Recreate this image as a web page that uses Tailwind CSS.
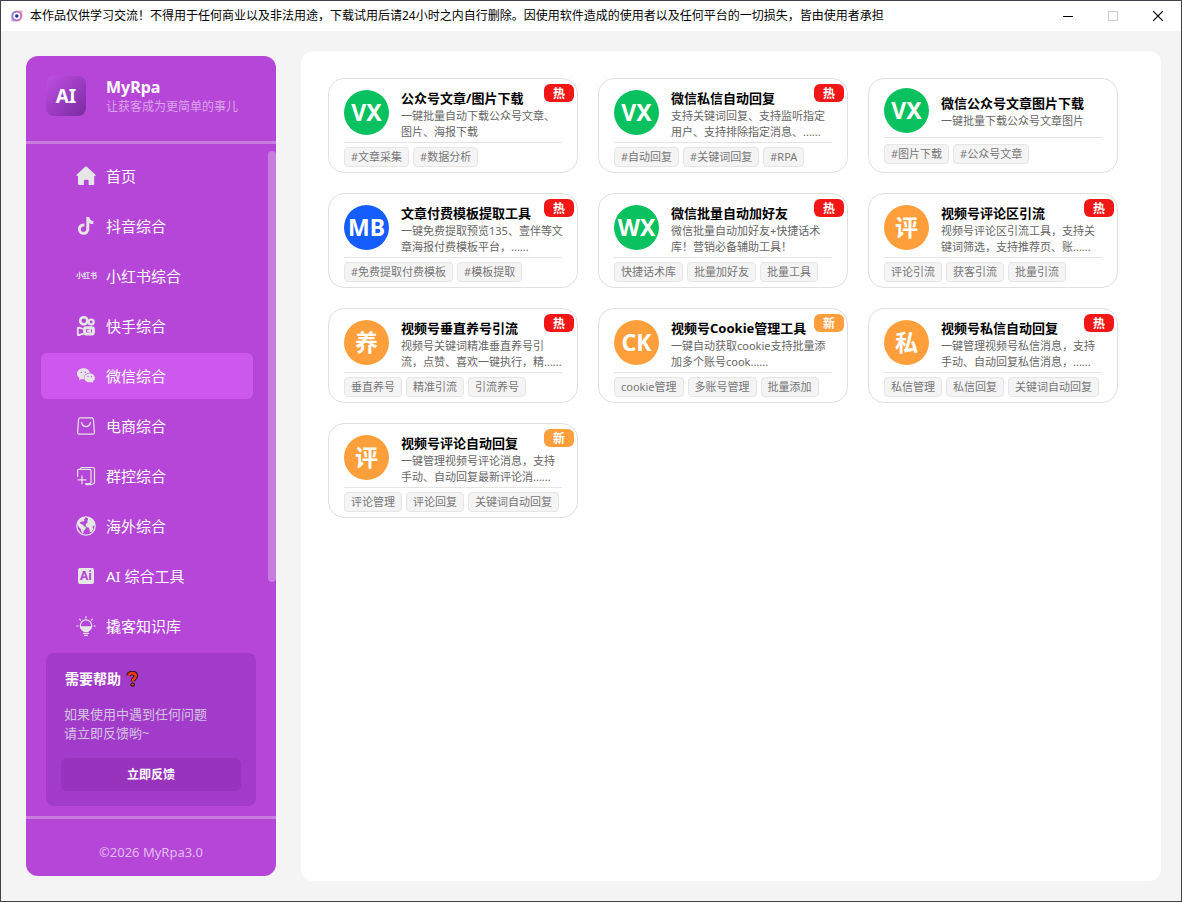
<!DOCTYPE html>
<html lang="zh-CN">
<head>
    <meta charset="UTF-8">
    <meta name="viewport" content="width=device-width, initial-scale=1.0">
    <title>MyRpa</title>
    <script src="https://cdn.jsdelivr.net/npm/@tailwindcss/browser@4"></script>
</head>
<body class="min-h-screen flex flex-col bg-[#f4f4f4] border border-[#3f424d] font-['Noto_Sans','Noto_Sans_CJK_SC',sans-serif]">
    <!-- Title bar -->
    <header class="flex items-center h-[30px] bg-white pl-2.5">
        <svg class="w-3 h-3 shrink-0" viewBox="0 0 12 12" aria-hidden="true">
            <defs>
                <linearGradient id="app-icon" x1="0" y1="0" x2="1" y2="0">
                    <stop offset="0" stop-color="#8d7be0"/>
                    <stop offset="1" stop-color="#e07ab0"/>
                </linearGradient>
            </defs>
            <circle cx="5.8" cy="6" r="4.4" fill="none" stroke="url(#app-icon)" stroke-width="2.2"/>
            <path d="M6 .8 11.800.4 11 6M5.600 11.200.2 11.600.8 6z" fill="url(#app-icon)" fill-opacity=".6"/>
            <circle cx="5.8" cy="6" r="3.300" fill="#fff"/>
            <circle cx="5.8" cy="6" r="1.8" fill="#2b2f9e"/>
        </svg>
        <h1 class="flex-1 pl-[7px] text-[12px] leading-4 text-black whitespace-nowrap">本作品仅供学习交流！不得用于任何商业以及非法用途，下载试用后请24小时之内自行删除。因使用软件造成的使用者以及任何平台的一切损失，皆由使用者承担</h1>
        <button type="button" aria-label="最小化" class="w-[46px] h-[30px] flex items-center justify-center">
            <svg class="w-[10px] h-[10px]" viewBox="0 0 10 10" shape-rendering="crispEdges"><path d="M0 5.5h10" stroke="#000"/></svg>
        </button>
        <button type="button" aria-label="最大化" disabled class="w-11 h-[30px] flex items-center justify-center">
            <svg class="w-[10px] h-[10px]" viewBox="0 0 10 10" shape-rendering="crispEdges"><path d="M.5.5h9v9h-9z" fill="none" stroke="#ccc"/></svg>
        </button>
        <button type="button" aria-label="关闭" class="w-[46px] h-[30px] flex items-center justify-center">
            <svg class="w-[10px] h-[10px]" viewBox="0 0 10 10"><path d="m0 0 10 10M10 0 0 10" stroke="#000" stroke-width="1.2"/></svg>
        </button>
    </header>

    <div class="flex-1 flex gap-[25px] pl-[25px] pr-5 py-5">
        <!-- Sidebar -->
        <aside class="relative w-[250px] shrink-0 my-[5px] flex flex-col rounded-xl bg-[#b546d7] text-white">
            <div class="flex items-start h-[85px] pt-5 pl-5">
                <div class="w-10 h-10 flex items-center justify-center rounded-lg bg-linear-to-br from-[#c050e3] to-[#7a2aa2] text-[19px] font-bold">AI</div>
                <div class="pl-5">
                    <h2 class="text-[16px] leading-[22px] font-bold">MyRpa</h2>
                    <p class="text-[12px] leading-[18px] text-[#dba5ec]">让获客成为更简单的事儿</p>
                </div>
            </div>
            <div class="h-[3px] bg-[#c77ce0]"></div>

            <nav class="flex flex-col gap-1 pt-[9px] pl-[15px] pr-[23px] text-[15px]">
                <a href="#" class="flex items-center gap-2.5 h-[46px] pl-[35px] rounded-md">
                    <svg class="w-5 h-5" viewBox="0 0 20 20" fill="#e6e6e6"><path d="M9.2.8a1.2 1.2 0 0 1 1.6 0l8.4 7.6c.8.8.5 1.6-.4 1.6h-.6v7.8c0 .8-.6 1.2-1.2 1.2h-4.4v-4.2a1 1 0 0 0-1-1H8.9a1 1 0 0 0-1 1V19H3.2C2.4 19 2 18.500 2 17.800V10h-.6c-1 0-1.200-.8-.5-1.600z"/></svg>
                    首页
                </a>
                <a href="#" class="flex items-center gap-2.5 h-[46px] pl-[35px] rounded-md">
                    <svg class="w-5 h-5" viewBox="0 0 20 20" fill="#e6e6e6"><path d="M10.300 1h3c.2 2.400 1.700 3.900 4 4.100v3c-1.500 0-2.900-.4-4-1.200v6.200a5.700 5.700 0 1 1-5.700-5.700l.8.100v3.100a2.700 2.700 0 1 0 1.900 2.500z"/></svg>
                    抖音综合
                </a>
                <a href="#" class="flex items-center gap-2.5 h-[46px] pl-[35px] rounded-md">
                    <span aria-hidden="true" class="w-5 text-[7px] leading-5 font-bold text-[#e6e6e6] whitespace-nowrap">小红书</span>
                    小红书综合
                </a>
                <a href="#" class="flex items-center gap-2.5 h-[46px] pl-[35px] rounded-md">
                    <svg class="w-5 h-5" viewBox="0 0 20 20" fill="none" stroke="#e6e6e6">
                        <circle cx="7.8" cy="4.8" r="3.600" stroke-width="2.600"/>
                        <circle cx="15.200" cy="6" r="2.500" stroke-width="2.200"/>
                        <rect x="8.600" y="11.800" width="8.800" height="6.200" rx="1.500" stroke-width="3"/>
                        <path d="M7.500 13 2.800 11.600c-.6-.1-1 .2-1 .8v6c0 .7.4 1 1 .8l4.700-1.600" stroke-width="1.800"/>
                        <path d="m11 15 3.500-1.600v3z" fill="#e6e6e6"/>
                    </svg>
                    快手综合
                </a>
                <a href="#" aria-current="page" class="flex items-center gap-2.5 h-[46px] pl-[35px] rounded-md bg-[#cd58ed]">
                    <svg class="w-5 h-5" viewBox="0 0 20 20">
                        <path fill="#e6e6e6" d="M7.400 2.300C3.900 2.300 1 4.700 1 7.800c0 1.700.9 3.200 2.400 4.200L3 14.200l2.300-1.300c.7.2 1.400.3 2.200.3h.5C7.200 9.300 10.300 6.800 14 6.800 13.400 4.100 10.600 2.300 7.400 2.300z"/>
                        <path fill="#e6e6e6" d="M13.600 7.500c-2.900 0-5.300 2-5.300 4.400s2.400 4.300 5.300 4.300c.6 0 1.200-.1 1.800-.3l1.900 1-.5-1.600c1.300-.8 2.100-2 2.100-3.400 0-2.400-2.400-4.400-5.300-4.400z"/>
                        <g fill="#cd58ed"><circle cx="5.300" cy="6.200" r=".8"/><circle cx="9.400" cy="6.200" r=".8"/><circle cx="12" cy="10.500" r=".7"/><circle cx="15.400" cy="10.500" r=".7"/></g>
                    </svg>
                    微信综合
                </a>
                <a href="#" class="flex items-center gap-2.5 h-[46px] pl-[35px] rounded-md">
                    <svg class="w-5 h-5" viewBox="0 0 20 20" fill="none" stroke="#e6e6e6" stroke-width="1.2" stroke-linecap="round" stroke-linejoin="round">
                        <path d="M4.200 1.800h11.600c.9 0 1.500.6 1.600 1.400l1 13.200c.1 1-.6 1.700-1.500 1.700H3.100c-.9 0-1.600-.7-1.500-1.700l1-13.200c.1-.8.7-1.400 1.600-1.400zM5.500 6.500c.8 2.700 2.400 4.200 4.500 4.200s3.700-1.500 4.500-4.200"/>
                    </svg>
                    电商综合
                </a>
                <a href="#" class="flex items-center gap-2.5 h-[46px] pl-[35px] rounded-md">
                    <svg class="w-5 h-5" viewBox="0 0 20 20" fill="none" stroke="#e6e6e6" stroke-width="1.200" stroke-linecap="round" stroke-linejoin="round">
                        <path d="M1.600 10.500V4.800c0-.9.5-1.400 1.400-1.400h10.600c.9 0 1.400.5 1.400 1.400v11.400c0 .9-.5 1.400-1.400 1.400h-4M4 3.200 5.200 1.500H17c.9 0 1.500.6 1.500 1.500v13.300c0 .8-.5 1.300-1 1.500l-3 .9H10M6 9.800v8M2 13.800h8"/>
                    </svg>
                    群控综合
                </a>
                <a href="#" class="flex items-center gap-2.5 h-[46px] pl-[35px] rounded-md">
                    <svg class="w-5 h-5" viewBox="0 0 20 20">
                        <circle cx="10" cy="10" r="9.200" fill="none" stroke="#e6e6e6" stroke-width="1.300"/>
                        <path fill="#e6e6e6" d="M1 8C2 4.500 4.800 1.700 8.600 1.200l.6 1.200-1.400 1.200.8 1.200-1.500 1-1.200-.6-2 1.500.8 1.300 2 .5 1.200 1.700 2 .8-.5 2.200-1.600 1.400-.4 2.400-1 .8-1.200-2.800-.4-2-1.900-1.700zM11.500 1c3.800.6 6.800 3.700 7.500 7.400l-.8 2-1.200-.8-.6 1.700 1 1.600-1.600 2.700-1.800.6-.6-3-.8-1.700-1.800-.2-1.200-1.800.6-2.200 1.800-1-.9-1.300 1-1.200z"/>
                    </svg>
                    海外综合
                </a>
                <a href="#" class="flex items-center gap-2.5 h-[46px] pl-[35px] rounded-md">
                    <span aria-hidden="true" class="w-5 h-5 p-0.5"><span class="block h-4 rounded-xs bg-[#e6e6e6] text-center text-[12px] leading-4 font-bold text-[#b546d7]">Ai</span></span>
                    AI 综合工具
                </a>
                <a href="#" class="flex items-center gap-2.5 h-[46px] pl-[35px] rounded-md">
                    <svg class="w-5 h-5" viewBox="0 0 20 20" fill="none" stroke="#e6e6e6" stroke-width="1.200" stroke-linecap="round">
                        <path d="M10 .6v1.400M3.600 3.200l1 1M16.400 3.200l-1 1M.8 10H2M18 10h1.200M7.500 17.300h5M8.500 19.300h3"/>
                        <circle cx="10" cy="9.600" r="5.700"/>
                        <path fill="#e6e6e6" stroke="none" d="M4.300 10.300h11.400c-.3 2.200-1.500 3.800-3.200 4.700v1h-5v-1c-1.700-.9-2.900-2.500-3.200-4.700z"/>
                    </svg>
                    撬客知识库
                </a>
            </nav>
            <!-- Menu scrollbar thumb -->
            <div class="absolute right-0 top-[95px] w-2 h-[431px] rounded-full bg-[#c77ce0]"></div>

            <section class="mx-5 mt-1 mb-2.5 px-[15px] pt-4 pb-[15px] rounded-lg bg-[#a33bca]">
                <h3 class="flex items-center gap-1 pl-1 text-[14px] leading-5 font-bold">
                    需要帮助
                    <svg class="w-4 h-4" viewBox="0 0 16 16" fill="none" stroke-linejoin="round" role="img" aria-label="?">
                        <path d="M3.400 4.800C3.900 2.800 5.400 2.100 7.200 2.100c2.200 0 3.600 1.100 3.600 2.900 0 2.400-3.100 2.700-3.100 5.300" stroke="#111" stroke-width="4.400"/>
                        <path d="M7.600 13.600h.1" stroke="#111" stroke-width="4.400" stroke-linecap="round"/>
                        <path d="M3.400 4.800C3.900 2.800 5.400 2.100 7.200 2.100c2.200 0 3.600 1.100 3.600 2.900 0 2.400-3.100 2.700-3.100 5.300" stroke="#f03a17" stroke-width="2.600"/>
                        <path d="M7.600 13.600h.1" stroke="#f03a17" stroke-width="2.400" stroke-linecap="round"/>
                    </svg>
                </h3>
                <p class="pl-[3px] mt-4 text-[13px] leading-[19px] text-[#d3c4e4]">如果使用中遇到任何问题<br>请立即反馈哟~</p>
                <button type="button" class="block w-full h-[33px] mt-[15px] rounded-md bg-[#9833bd] text-[12px] font-bold">立即反馈</button>
            </section>
            <div class="h-[3px] bg-[#c77ce0]"></div>
            <footer class="mt-auto pt-6 pb-[14px] text-center text-[13px] leading-[19px] text-[#e3bdf0]">©2026 MyRpa3.0</footer>
        </aside>

        <!-- Tool cards -->
        <main class="flex-1 p-[27px] rounded-xl bg-white">
            <div id="tool-list" class="grid grid-cols-[repeat(auto-fill,250px)] gap-5"></div>
        </main>
    </div>

    <script>
        const toolListElement = document.getElementById('tool-list');

        const iconColors = {
            green: 'bg-[#0ac160]',
            blue: 'bg-[#165dff]',
            orange: 'bg-[#ff9f3b]'
        };

        const badgeColors = {
            '热': 'bg-[#f11717]',
            '新': 'bg-[#ff9f3b]'
        };

        const tools = [
            { icon: 'VX', color: 'green', badge: '热', name: '公众号文章/图片下载', lines: ['一键批量自动下载公众号文章、', '图片、海报下载'], tags: ['#文章采集', '#数据分析'] },
            { icon: 'VX', color: 'green', badge: '热', name: '微信私信自动回复', lines: ['支持关键词回复、支持监听指定', '用户、支持排除指定消息、......'], tags: ['#自动回复', '#关键词回复', '#RPA'] },
            { icon: 'VX', color: 'green', badge: '', name: '微信公众号文章图片下载', lines: ['一键批量下载公众号文章图片'], tags: ['#图片下载', '#公众号文章'] },
            { icon: 'MB', color: 'blue', badge: '热', name: '文章付费模板提取工具', lines: ['一键免费提取预览135、壹伴等文', '章海报付费模板平台，......'], tags: ['#免费提取付费模板', '#模板提取'] },
            { icon: 'WX', color: 'green', badge: '热', name: '微信批量自动加好友', lines: ['微信批量自动加好友+快捷话术', '库！营销必备辅助工具！'], tags: ['快捷话术库', '批量加好友', '批量工具'] },
            { icon: '评', color: 'orange', badge: '热', name: '视频号评论区引流', lines: ['视频号评论区引流工具，支持关', '键词筛选，支持推荐页、账......'], tags: ['评论引流', '获客引流', '批量引流'] },
            { icon: '养', color: 'orange', badge: '热', name: '视频号垂直养号引流', lines: ['视频号关键词精准垂直养号引', '流，点赞、喜欢一键执行，精......'], tags: ['垂直养号', '精准引流', '引流养号'] },
            { icon: 'CK', color: 'orange', badge: '新', name: '视频号Cookie管理工具', lines: ['一键自动获取cookie支持批量添', '加多个账号cook......'], tags: ['cookie管理', '多账号管理', '批量添加'] },
            { icon: '私', color: 'orange', badge: '热', name: '视频号私信自动回复', lines: ['一键管理视频号私信消息，支持', '手动、自动回复私信消息，......'], tags: ['私信管理', '私信回复', '关键词自动回复'] },
            { icon: '评', color: 'orange', badge: '新', name: '视频号评论自动回复', lines: ['一键管理视频号评论消息，支持', '手动、自动回复最新评论消......'], tags: ['评论管理', '评论回复', '关键词自动回复'] }
        ];

        function renderTool(tool) {
            // One-line descriptions get a shorter top part and roomier tags
            const isShort = tool.lines.length === 1;
            const badge = tool.badge
                ? `<span class="absolute top-[5px] right-[3px] w-[30px] h-[18px] rounded-md text-center text-[12px] leading-5 font-bold text-white ${badgeColors[tool.badge]}">${tool.badge}</span>`
                : '';
            const tags = tool.tags.map(tag => `<li class="h-5 px-1.5 rounded border border-[#e6e6e6] bg-[#f4f4f4] text-[11px] leading-[18px] text-[#777]">${tag}</li>`).join('');

            return `
                <article class="relative min-h-[95px] px-[15px] rounded-2xl border border-[#e0e0e0] bg-white">
                    <div class="flex items-center gap-3 pt-1 border-b border-[#e4e4e4] ${isShort ? 'h-[59px]' : 'h-16'}">
                        <div class="w-[45px] h-[45px] shrink-0 flex items-center justify-center rounded-full text-[23px] font-bold text-white ${iconColors[tool.color]}">${tool.icon}</div>
                        <div class="whitespace-nowrap ${isShort ? 'pt-0.5' : 'pt-1'}">
                            <h3 class="text-[13px] leading-[19px] font-bold text-black">${tool.name}</h3>
                            <p class="text-[11px] leading-4 text-[#666]">${tool.lines.join('<br>')}</p>
                        </div>
                    </div>
                    <ul class="flex gap-1 ${isShort ? 'pt-1.5' : 'pt-1'}">${tags}</ul>
                    ${badge}
                </article>`;
        }

        toolListElement.innerHTML = tools.map(renderTool).join('');
    </script>
</body>
</html>
